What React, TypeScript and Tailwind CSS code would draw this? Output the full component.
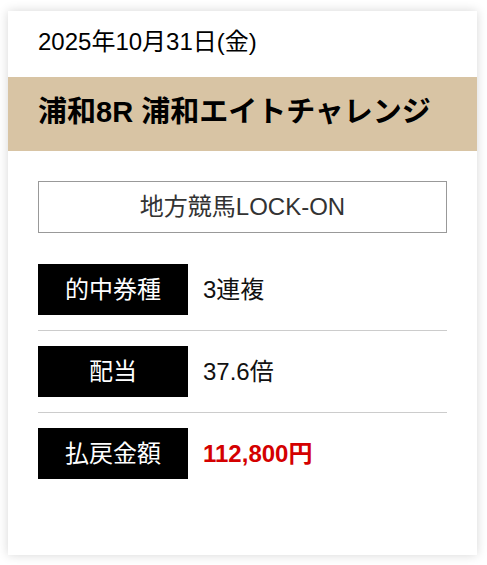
// Race result card: date, race title band, source box and payout rows.
const ROWS = [
  { label: "的中券種", value: "3連複", accent: false },
  { label: "配当", value: "37.6倍", accent: false },
  { label: "払戻金額", value: "112,800円", accent: true },
];

export default function App() {
  return (
    <div className="min-h-[565px] bg-white pl-[8px] pr-[10px] pt-[11px] font-['Liberation_Sans','Noto_Sans_CJK_JP',sans-serif] text-black">
      <div className="w-[469px] bg-white shadow-[0_0_10px_rgba(0,0,0,0.16)]">
        <p className="px-[30px] pb-[17px] pt-[13px] text-[24px] leading-[36px]">
          2025年10月31日(金)
        </p>
        <h2 className="bg-[#d8c4a4] px-[30px] pb-[18px] pt-[14px] text-[29px] font-bold leading-[42px]">
          浦和8R 浦和エイトチャレンジ
        </h2>

        <div className="px-[30px] pb-[76px] pt-[30px]">
          <div className="flex h-[52px] items-center justify-center border border-[#999] text-[24px] text-[#333]">
            地方競馬LOCK-ON
          </div>

          <ul className="mt-[31px]">
            {ROWS.map((row, i) => (
              <li
                key={row.label}
                className={`flex items-center gap-[15px] ${
                  i < ROWS.length - 1 ? "border-b border-[#ccc] pb-[15px]" : ""
                } ${i > 0 ? "pt-[15px]" : ""}`}
              >
                <span className="flex h-[51px] w-[150px] items-center justify-center bg-black text-[24px] text-white">
                  {row.label}
                </span>
                <span
                  className={`text-[24px] ${
                    row.accent ? "font-bold text-[#d40000]" : "text-[#111]"
                  }`}
                >
                  {row.value}
                </span>
              </li>
            ))}
          </ul>
        </div>
      </div>
    </div>
  );
}
